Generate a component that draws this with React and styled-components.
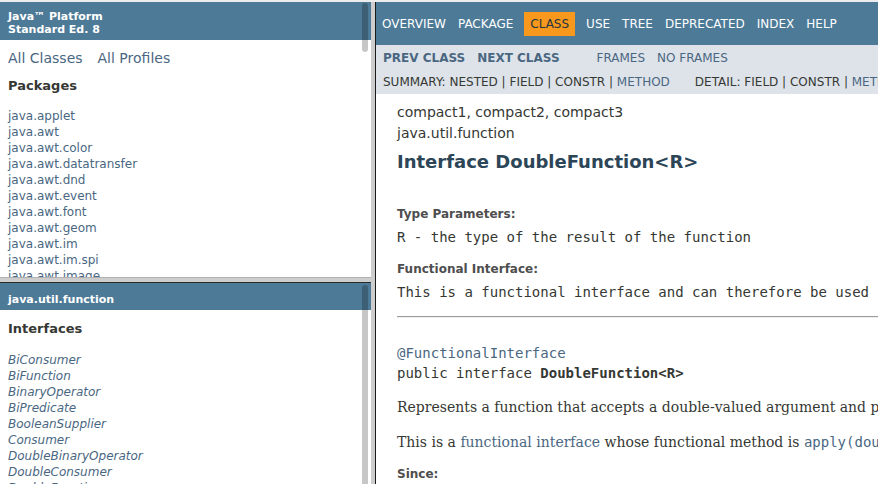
import React from 'react';
import styled, { createGlobalStyle } from 'styled-components';

const GlobalStyle = createGlobalStyle`
  html, body {
    margin: 0;
    padding: 0;
    height: 100%;
    overflow: hidden;
    background: #ffffff;
  }
  #root {
    height: 100%;
  }
  body {
    font-family: 'DejaVu Sans', Arial, Helvetica, sans-serif;
    font-size: 14px;
    color: #353833;
  }
  a {
    color: #4a6782;
    text-decoration: none;
  }
`;

const Frameset = styled.div`
  display: flex;
  height: 484px;
  box-sizing: border-box;
  border-top: 2px solid #ececec;
`;

const LeftColumn = styled.div`
  width: 371px;
  display: flex;
  flex-direction: column;
`;

const TopFrame = styled.div`
  position: relative;
  height: 275px;
  overflow: hidden;
`;

const HSplitter = styled.div`
  height: 4px;
  background: #cdcdcd;
  border-top: 1px solid #b0b0b0;
`;

const BottomFrame = styled.div`
  position: relative;
  flex: 1;
  overflow: hidden;
  border-top: 1px solid #2b2b2b;
`;

const VSplitter = styled.div`
  width: 4px;
  background: #cdcdcd;
`;

const RightFrame = styled.div`
  flex: 1;
  min-width: 0;
  overflow: hidden;
  border-left: 1px solid #1a1a1a;
  white-space: nowrap;
`;

const Thumb = styled.div`
  position: absolute;
  right: 3px;
  width: 6px;
  top: ${p => p.$top}px;
  height: ${p => p.$height}px;
  border-radius: 3px;
  background: rgba(0, 0, 0, 0.22);
`;

const Bar = styled.div`
  background: #4d7a97;
  color: #ffffff;
  font-size: 11px;
  font-weight: bold;
  line-height: 13px;
  padding: ${p => p.$padTop}px 5px 4px 8px;
`;

const IndexHeader = styled.div`
  margin: 10px 8px 12px;
  line-height: 16px;
  display: flex;
  gap: 15px;
`;

const IndexTitle = styled.h2`
  font-size: 13px;
  font-weight: bold;
  line-height: 15px;
  margin: ${p => p.$top}px 8px ${p => p.$bottom}px;
  color: #353833;
`;

const IndexList = styled.ul`
  list-style: none;
  margin: 0;
  padding: 0 8px;
`;

const IndexItem = styled.li`
  font-size: 12px;
  line-height: 16px;
  font-style: ${p => (p.$italic ? 'italic' : 'normal')};
`;

const TopNav = styled.ul`
  display: flex;
  align-items: flex-start;
  list-style: none;
  margin: 0;
  padding: 10px 0 0 0;
  height: 33px;
  background: #4d7a97;
  font-size: 12px;
  line-height: 14px;
`;

const NavCell = styled.li`
  padding: 5px 6px;
  margin: ${p => (p.$active ? '0 5px' : '0')};
  color: ${p => (p.$active ? '#253441' : '#ffffff')};
  background: ${p => (p.$active ? '#f8981d' : 'transparent')};
`;

const SubNav = styled.div`
  background: #dee3e9;
  font-size: 12px;
  line-height: 14px;
  padding: 6px 0 5px 0;
`;

const SubRow = styled.div`
  display: flex;
  margin-top: ${p => p.$top || 0}px;
  padding-left: ${p => p.$left || 0}px;
`;

const SubGroup = styled.ul`
  display: flex;
  list-style: none;
  margin: 0 25px 0 0;
  padding: 0;
`;

const SubCell = styled.li`
  padding: 0 ${p => p.$pad}px;
  font-weight: ${p => (p.$bold ? 'bold' : 'normal')};
  white-space: pre;
`;

const Header = styled.div`
  padding: 5px 0 0 21px;
`;

const SubTitle = styled.div`
  margin-top: 5px;
  line-height: 16px;
`;

const Title = styled.h2`
  margin: 11px 0 9px;
  font-size: 18px;
  line-height: 20px;
  font-weight: bold;
  color: #2c4557;
`;

const Description = styled.div`
  padding: 27px 0 0 21px;
`;

const Term = styled.div`
  font-size: 12px;
  font-weight: bold;
  line-height: 13px;
  color: #4e4e4e;
  margin-top: ${p => p.$top}px;
`;

const Def = styled.div`
  margin-top: 8px;
  font-family: 'DejaVu Sans Mono', monospace;
  font-size: 14px;
  line-height: 16px;
`;

const Rule = styled.hr`
  margin: 16px 0 25px;
  border: 0;
  border-top: 1px solid #9c9c9c;
  border-bottom: 1px solid #eeeeee;
`;

const Signature = styled.pre`
  margin: 0;
  font-family: 'DejaVu Sans Mono', monospace;
  font-size: 14px;
  line-height: 20px;
`;

const Block = styled.div`
  margin-top: ${p => p.$top}px;
  font-family: 'DejaVu Serif', Georgia, 'Times New Roman', serif;
  font-size: 14px;
  line-height: 16px;
`;

const Code = styled.code`
  font-family: 'DejaVu Sans Mono', monospace;
  font-size: 14px;
`;

const packages = [
  'java.applet',
  'java.awt',
  'java.awt.color',
  'java.awt.datatransfer',
  'java.awt.dnd',
  'java.awt.event',
  'java.awt.font',
  'java.awt.geom',
  'java.awt.im',
  'java.awt.im.spi',
  'java.awt.image',
  'java.awt.image.renderable',
];

const interfaces = [
  'BiConsumer',
  'BiFunction',
  'BinaryOperator',
  'BiPredicate',
  'BooleanSupplier',
  'Consumer',
  'DoubleBinaryOperator',
  'DoubleConsumer',
  'DoubleFunction',
  'DoublePredicate',
];

const navItems = ['Overview', 'Package', 'Class', 'Use', 'Tree', 'Deprecated', 'Index', 'Help'];

const App = () => {
  return (
    <>
      <GlobalStyle />
      <Frameset>
        <LeftColumn>
          <TopFrame>
            <Bar $padTop={8}>
              Java™ Platform
              <br />
              Standard Ed. 8
            </Bar>
            <IndexHeader>
              <a href="#all">All Classes</a>
              <a href="#profiles">All Profiles</a>
            </IndexHeader>
            <IndexTitle $top={0} $bottom={15}>
              Packages
            </IndexTitle>
            <IndexList>
              {packages.map(name => (
                <IndexItem key={name}>
                  <a href="#pkg">{name}</a>
                </IndexItem>
              ))}
            </IndexList>
            <Thumb $top={1} $height={49} />
          </TopFrame>
          <HSplitter />
          <BottomFrame>
            <Bar $padTop={10}>java.util.function</Bar>
            <IndexTitle $top={11} $bottom={16}>
              Interfaces
            </IndexTitle>
            <IndexList>
              {interfaces.map(name => (
                <IndexItem key={name} $italic>
                  <a href="#iface">{name}</a>
                </IndexItem>
              ))}
            </IndexList>
            <Thumb $top={2} $height={220} />
          </BottomFrame>
        </LeftColumn>
        <VSplitter />
        <RightFrame>
          <TopNav>
            {navItems.map(item => (
              <NavCell key={item} $active={item === 'Class'}>
                {item.toUpperCase()}
              </NavCell>
            ))}
          </TopNav>
          <SubNav>
            <SubRow $left={1}>
              <SubGroup>
                <SubCell $pad={6} $bold>
                  <a href="#prev">PREV CLASS</a>
                </SubCell>
                <SubCell $pad={6} $bold>
                  <a href="#next">NEXT CLASS</a>
                </SubCell>
              </SubGroup>
              <SubGroup>
                <SubCell $pad={6}>
                  <a href="#frames">FRAMES</a>
                </SubCell>
                <SubCell $pad={6}>
                  <a href="#noframes">NO FRAMES</a>
                </SubCell>
              </SubGroup>
            </SubRow>
            <SubRow $top={10} $left={7}>
              <SubGroup>
                <SubCell $pad={0}>SUMMARY: NESTED | FIELD | CONSTR | </SubCell>
                <SubCell $pad={0}>
                  <a href="#method.summary">METHOD</a>
                </SubCell>
              </SubGroup>
              <SubGroup>
                <SubCell $pad={0}>DETAIL: FIELD | CONSTR | </SubCell>
                <SubCell $pad={0}>
                  <a href="#method.detail">METHOD</a>
                </SubCell>
              </SubGroup>
            </SubRow>
          </SubNav>
          <Header>
            <SubTitle>compact1, compact2, compact3</SubTitle>
            <SubTitle>java.util.function</SubTitle>
            <Title>Interface DoubleFunction&lt;R&gt;</Title>
          </Header>
          <Description>
            <Term $top={0}>Type Parameters:</Term>
            <Def>R - the type of the result of the function</Def>
            <Term $top={18}>Functional Interface:</Term>
            <Def>
              This is a functional interface and can therefore be used as the assignment target for a
              lambda expression or method reference.
            </Def>
            <Rule />
            <Signature>
              <a href="#fi">@FunctionalInterface</a>
              {'\n'}public interface <b>DoubleFunction&lt;R&gt;</b>
            </Signature>
            <Block $top={16}>
              Represents a function that accepts a double-valued argument and produces a result.
            </Block>
            <Block $top={19}>
              This is a <a href="#pkg-summary">functional interface</a> whose functional method is{' '}
              <Code>
                <a href="#apply">apply(double)</a>
              </Code>
              .
            </Block>
            <Term $top={18}>Since:</Term>
          </Description>
        </RightFrame>
      </Frameset>
    </>
  );
};

export default App;
